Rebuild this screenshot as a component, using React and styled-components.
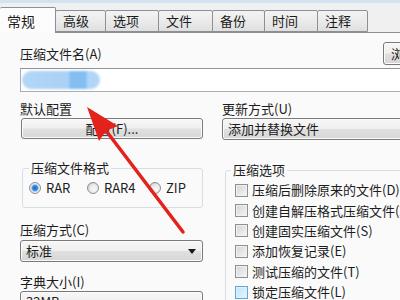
import React from "react";
import styled, { createGlobalStyle } from "styled-components";

const GlobalStyle = createGlobalStyle`
  * { box-sizing: border-box; }
  html, body {
    margin: 0;
    padding: 0;
    width: 400px;
    height: 300px;
    overflow: hidden;
    background: #f7f7f7;
  }
  body {
    font-family: "Noto Sans CJK SC", "Noto Sans", sans-serif;
    font-size: 13px;
    color: #1c1c1c;
  }
`;

const Window = styled.div`
  position: relative;
  width: 400px;
  height: 300px;
  overflow: hidden;
  background: #fafafa;
`;

const TopStrip = styled.div`
  height: 3px;
  background: #d3e2ef;
`;

const TabBar = styled.div`
  display: flex;
  align-items: flex-end;
  height: 30px;
  background: #f0f0f0;
  border-bottom: 1px solid #8c8f96;
`;

const Tab = styled.div`
  width: ${(p) => p.$w}px;
  height: ${(p) => (p.$active ? 26 : 22)}px;
  margin-bottom: ${(p) => (p.$active ? -1 : 0)}px;
  padding-left: 7px;
  display: flex;
  align-items: center;
  font-size: ${(p) => (p.$active ? 14 : 13)}px;
  line-height: 16px;
  border: 1px solid #8c8f96;
  border-bottom: ${(p) => (p.$active ? "none" : "1px solid #8c8f96")};
  border-left: ${(p) => (p.$first ? "none" : "1px solid #8c8f96")};
  border-radius: 2px 2px 0 0;
  background: ${(p) =>
    p.$active ? "#fcfcfc" : "linear-gradient(#f3f3f3, #ebebeb 50%, #dfdfdf)"};
  & + & {
    margin-left: -1px;
  }
`;

const Panel = styled.div`
  padding: 9px 0 0 20px;
`;

const NameRow = styled.div`
  display: flex;
  align-items: center;
  justify-content: space-between;
  width: 440px;
  height: 23px;
`;

const Label = styled.div`
  height: 16px;
  line-height: 16px;
  white-space: nowrap;
  margin-top: ${(p) => p.$mt || 0}px;
`;

const Button = styled.div`
  display: flex;
  align-items: center;
  justify-content: ${(p) => (p.$center ? "center" : "flex-start")};
  height: ${(p) => p.$h || 22}px;
  width: ${(p) => p.$w}px;
  margin-top: ${(p) => p.$mt || 0}px;
  margin-left: ${(p) => p.$ml || 0}px;
  padding: 0 ${(p) => (p.$center ? 0 : 5)}px;
  border: 1px solid #7a7a7a;
  border-radius: 3px;
  background: linear-gradient(#f7f7f7, #efefef 48%, #e0e0e0 52%, #d6d6d6);
  box-shadow: inset 0 0 0 1px #fbfbfb;
  line-height: 16px;
  white-space: nowrap;
  position: relative;
`;

const DropArrow = styled.span`
  position: absolute;
  right: 6px;
  top: 8px;
  width: 0;
  height: 0;
  border-left: 4px solid transparent;
  border-right: 4px solid transparent;
  border-top: 5px solid #1a1a1a;
`;

const NameInput = styled.div`
  margin-top: 3px;
  width: 420px;
  height: 24px;
  border: 1px solid #abadb3;
  border-top-color: #8f9296;
  background: #fff;
  padding: 2px 0 0 1px;
`;

const Blob = styled.div`
  width: 78px;
  height: 18px;
  border-radius: 9px;
  background: linear-gradient(
    90deg,
    #b3d6f6 0,
    #a9d1f6 60%,
    #84bdf2 62%,
    #84bdf2 82%,
    #b3d6f6 84%
  );
  filter: blur(1px);
`;

const Columns = styled.div`
  margin-top: 9px;
  display: grid;
  grid-template-columns: 183px 240px;
  column-gap: 19px;
`;

const Col = styled.div`
  display: flex;
  flex-direction: column;
`;

const Group = styled.fieldset`
  margin: ${(p) => p.$mt}px 0 0 ${(p) => p.$ml}px;
  padding: ${(p) => p.$pad};
  border: 1px solid #d5dfe5;
  border-radius: 3px;
  min-width: 0;
`;

const Legend = styled.legend`
  padding: 0 2px;
  height: 16px;
  line-height: 16px;
  font-size: 13px;
`;

const RadioRow = styled.div`
  display: flex;
  align-items: center;
  height: 16px;
`;

const RadioItem = styled.label`
  display: flex;
  align-items: center;
  gap: 5px;
  width: ${(p) => p.$w}px;
  line-height: 16px;
`;

const Radio = styled.span`
  width: 12px;
  height: 12px;
  border-radius: 50%;
  border: 1px solid #8c8f96;
  background: ${(p) =>
    p.$checked
      ? "radial-gradient(circle, #1d64c4 0, #3b8ee0 2.5px, #a9c8e8 3.5px, #eef0f2 4.5px, #dadada 6px)"
      : "radial-gradient(circle at 60% 60%, #fafafa 0, #e4e4e4 5px, #cfcfcf 6px)"};
`;

const CheckRow = styled.label`
  display: flex;
  align-items: center;
  gap: 4px;
  height: 20.4px;
  margin-left: 4px;
  white-space: nowrap;
  line-height: 16px;
`;

const Check = styled.span`
  flex: none;
  width: 13px;
  height: 13px;
  border: 1px solid ${(p) => (p.$hover ? "#5fa9d9" : "#8e8f8f")};
  background: ${(p) =>
    p.$hover
      ? "linear-gradient(135deg, #bfe4f7, #e9f6fd)"
      : "linear-gradient(135deg, #d4d4d4, #f6f6f6)"};
  box-shadow: inset 0 0 0 1px ${(p) => (p.$hover ? "#def1fb" : "#f1f1f1")};
`;

const Overlay = styled.svg`
  position: absolute;
  left: 0;
  top: 0;
  pointer-events: none;
`;

const tabs = [
  { t: "常规", w: 56 },
  { t: "高级", w: 51 },
  { t: "选项", w: 54 },
  { t: "文件", w: 55 },
  { t: "备份", w: 53 },
  { t: "时间", w: 54 },
  { t: "注释", w: 51 },
];

const options = [
  "压缩后删除原来的文件(D)",
  "创建自解压格式压缩文件(X)",
  "创建固实压缩文件(S)",
  "添加恢复记录(E)",
  "测试压缩的文件(T)",
  "锁定压缩文件(L)",
];

export default function App() {
  return (
    <Window>
      <GlobalStyle />
      <TopStrip />
      <TabBar>
        {tabs.map((tab, i) => (
          <Tab key={tab.t} $w={tab.w} $active={i === 0} $first={i === 0}>
            {tab.t}
          </Tab>
        ))}
      </TabBar>
      <Panel>
        <NameRow>
          <Label>压缩文件名(A)</Label>
          <Button $w={77} $h={23} $ml={0}>
            <span style={{ paddingLeft: 2 }}>浏览(B)...</span>
          </Button>
        </NameRow>
        <NameInput>
          <Blob />
        </NameInput>
        <Columns>
          <Col>
            <Label>默认配置</Label>
            <Button $w={182} $h={21} $mt={1} $ml={1} $center>
              配置(F)...
            </Button>
            <Group $mt={21} $ml={2} $pad="4px 6px 11px">
              <Legend>压缩文件格式</Legend>
              <RadioRow>
                <RadioItem $w={58}>
                  <Radio $checked />
                  RAR
                </RadioItem>
                <RadioItem $w={62}>
                  <Radio />
                  RAR4
                </RadioItem>
                <RadioItem $w={40}>
                  <Radio />
                  ZIP
                </RadioItem>
              </RadioRow>
            </Group>
            <Label $mt={14}>压缩方式(C)</Label>
            <Button $w={183} $h={22} $mt={2}>
              标准
              <DropArrow />
            </Button>
            <Label $mt={12}>字典大小(I)</Label>
            <Button $w={183} $h={22} $mt={1}>
              32MB
              <DropArrow />
            </Button>
          </Col>
          <Col>
            <Label>更新方式(U)</Label>
            <Button $w={240} $h={22} $mt={1}>
              添加并替换文件
            </Button>
            <Group $mt={22} $ml={3} $pad="2px 5px 10px">
              <Legend>压缩选项</Legend>
              {options.map((o, i) => (
                <CheckRow key={o}>
                  <Check $hover={i === options.length - 1} />
                  {o}
                </CheckRow>
              ))}
            </Group>
          </Col>
        </Columns>
      </Panel>
      <Overlay width="400" height="300" viewBox="0 0 400 300">
        <line
          x1="104"
          y1="128"
          x2="183"
          y2="232"
          stroke="#e3221b"
          strokeWidth="3.5"
          strokeLinecap="round"
        />
        <polygon points="87,107 118,126 106,131 99,141" fill="#e3221b" />
      </Overlay>
    </Window>
  );
}
